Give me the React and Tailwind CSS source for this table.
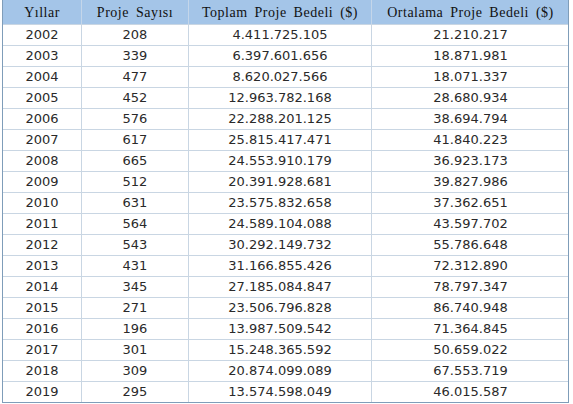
import React from "react";

const rows = [
  ["2002", "208", "4.411.725.105", "21.210.217"],
  ["2003", "339", "6.397.601.656", "18.871.981"],
  ["2004", "477", "8.620.027.566", "18.071.337"],
  ["2005", "452", "12.963.782.168", "28.680.934"],
  ["2006", "576", "22.288.201.125", "38.694.794"],
  ["2007", "617", "25.815.417.471", "41.840.223"],
  ["2008", "665", "24.553.910.179", "36.923.173"],
  ["2009", "512", "20.391.928.681", "39.827.986"],
  ["2010", "631", "23.575.832.658", "37.362.651"],
  ["2011", "564", "24.589.104.088", "43.597.702"],
  ["2012", "543", "30.292.149.732", "55.786.648"],
  ["2013", "431", "31.166.855.426", "72.312.890"],
  ["2014", "345", "27.185.084.847", "78.797.347"],
  ["2015", "271", "23.506.796.828", "86.740.948"],
  ["2016", "196", "13.987.509.542", "71.364.845"],
  ["2017", "301", "15.248.365.592", "50.659.022"],
  ["2018", "309", "20.874.099.089", "67.553.719"],
  ["2019", "295", "13.574.598.049", "46.015.587"],
];

const headers = ["Yıllar", "Proje Sayısı", "Toplam Proje Bedeli ($)", "Ortalama Proje Bedeli ($)"];

const cols = "grid grid-cols-[79px_107px_183px_197px]";

const App = () => {
  return (
    <div className="w-[573px] h-[404px] bg-white pl-[2px]">
      <div className="w-[567px] border border-[#7f9db9] border-t-0">
        {/* header */}
        <div className={`${cols} h-[24px] bg-[#a4c5e8] font-['Liberation_Serif',serif] text-[14px] text-[#111] tracking-[0.5px] [word-spacing:3px]`}>
          {headers.map((h, i) => (
            <div
              key={h}
              className={`flex items-center justify-center pt-px ${i < 3 ? "border-r border-[#c4d6ea]" : ""}`}
            >
              {h}
            </div>
          ))}
        </div>
        {/* data rows */}
        {rows.map((r) => (
          <div
            key={r[0]}
            className={`${cols} h-[21px] border-t border-[#c9d6e3] font-['DejaVu_Sans',sans-serif] text-[13px] text-[#2a2a2a]`}
          >
            {r.map((c, i) => (
              <div
                key={i}
                className={`flex items-center justify-center ${i < 3 ? "border-r border-[#c9d6e3]" : ""}`}
              >
                {c}
              </div>
            ))}
          </div>
        ))}
      </div>
    </div>
  );
};

export default App;
